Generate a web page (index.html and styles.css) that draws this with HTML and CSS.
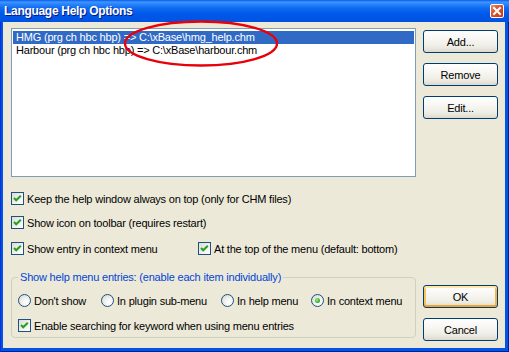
FILE: index.html
```html
<!DOCTYPE html>
<html>
<head>
<meta charset="utf-8">
<title>Language Help Options</title>
<link rel="stylesheet" href="styles.css">
</head>
<body>
<div class="window">
  <div class="titlebar">
    <span class="title">Language Help Options</span>
    <span class="close"><svg width="12" height="12" viewBox="0 0 12 12"><path d="M3 3 L9 9 M9 3 L3 9" stroke="#fff" stroke-width="2" stroke-linecap="square"/></svg></span>
  </div>
  <div class="client">
    <div class="top">
      <div class="listbox">
        <div class="item selected">HMG (prg ch hbc hbp) =&gt; C:\xBase\hmg_help.chm</div>
        <div class="item">Harbour (prg ch hbc hbp) =&gt; C:\xBase\harbour.chm</div>
      </div>
      <div class="btncol">
        <div class="btn">Add...</div>
        <div class="btn">Remove</div>
        <div class="btn">Edit...</div>
      </div>
    </div>
    <div class="checks">
      <div class="row r1"><span class="cb"><svg width="11" height="11" viewBox="0 0 11 11"><path d="M2 5 L4.2 7.3 L8.8 2.7" fill="none" stroke="#21A121" stroke-width="2"/></svg></span>Keep the help window always on top (only for CHM files)</div>
      <div class="row r2"><span class="cb"><svg width="11" height="11" viewBox="0 0 11 11"><path d="M2 5 L4.2 7.3 L8.8 2.7" fill="none" stroke="#21A121" stroke-width="2"/></svg></span>Show icon on toolbar (requires restart)</div>
      <div class="row r3">
        <div class="opt first"><span class="cb"><svg width="11" height="11" viewBox="0 0 11 11"><path d="M2 5 L4.2 7.3 L8.8 2.7" fill="none" stroke="#21A121" stroke-width="2"/></svg></span>Show entry in context menu</div>
        <div class="opt"><span class="cb"><svg width="11" height="11" viewBox="0 0 11 11"><path d="M2 5 L4.2 7.3 L8.8 2.7" fill="none" stroke="#21A121" stroke-width="2"/></svg></span>At the top of the menu (default: bottom)</div>
      </div>
    </div>
    <div class="bottom">
      <fieldset class="group">
        <legend>Show help menu entries: (enable each item individually)</legend>
        <div class="radios">
          <div class="opt"><span class="rb"></span>Don't show</div>
          <div class="opt"><span class="rb"></span>In plugin sub-menu</div>
          <div class="opt"><span class="rb"></span>In help menu</div>
          <div class="opt"><span class="rb on"><span class="dot"></span></span>In context menu</div>
        </div>
        <div class="row gr"><span class="cb"><svg width="11" height="11" viewBox="0 0 11 11"><path d="M2 5 L4.2 7.3 L8.8 2.7" fill="none" stroke="#21A121" stroke-width="2"/></svg></span>Enable searching for keyword when using menu entries</div>
      </fieldset>
      <div class="btncol low">
        <div class="btn default">OK</div>
        <div class="btn">Cancel</div>
      </div>
    </div>
  </div>
  <svg class="annot" width="509" height="352" viewBox="0 0 509 352"><ellipse cx="201" cy="43.5" rx="76" ry="22" fill="none" stroke="#E8000B" stroke-width="2.4"/></svg>
</div>
</body>
</html>
```
FILE: styles.css
```css
* { box-sizing: border-box; }
html, body { margin: 0; padding: 0; }
body {
  width: 509px;
  height: 352px;
  overflow: hidden;
  font-family: "Liberation Sans", Arial, sans-serif;
  font-size: 11px;
  letter-spacing: -0.2px;
  color: #000;
  background: #0055E5;
}
.window {
  position: relative;
  width: 509px;
  height: 352px;
  display: flex;
  flex-direction: column;
  background: #0055E5;
  box-shadow: inset 1px 0 #0831D9, inset -1px 0 #001EA0, inset 0 -1px #001EA0;
}
.titlebar {
  height: 22px;
  flex: none;
  display: flex;
  align-items: center;
  padding: 0 5px 0 4px;
  background: linear-gradient(to bottom, #0A5BEA 0, #3D95FF 2px, #2B86FB 4px, #0F6BF2 8px, #0058E8 14px, #0055E5 20px, #0050DC 22px);
}
.title {
  color: #fff;
  font-weight: bold;
  font-size: 12px;
  letter-spacing: -0.3px;
  text-shadow: 1px 1px #0A1883;
}
.close {
  margin-left: auto;
  width: 14px;
  height: 14px;
  border: 1px solid #fff;
  border-radius: 2px;
  background: linear-gradient(135deg, #EC8B6B 0%, #DA5028 45%, #C23A12 100%);
  display: flex;
  align-items: center;
  justify-content: center;
}
.close svg { display: block; }
.client {
  flex: 1;
  margin: 0 4px 4px 3px;
  background: #ECE9D8;
  padding: 6px 7px 0 8px;
  display: flex;
  flex-direction: column;
}
.top { display: flex; gap: 7px; }
.listbox {
  width: 405px;
  height: 149px;
  background: #fff;
  border: 1px solid #7F9DB9;
  padding: 2px 1px;
}
.item {
  height: 13px;
  line-height: 13px;
  padding-left: 3px;
  white-space: nowrap;
}
.item.selected { background: #316AC5; color: #fff; }
.btncol {
  display: flex;
  flex-direction: column;
  gap: 10px;
  padding-top: 2px;
}
.btncol.low { padding-top: 14px; }
.btn {
  width: 75px;
  height: 23px;
  border: 1px solid #003C74;
  border-radius: 3px;
  background: linear-gradient(to bottom, #FFFFFF 0%, #F7F6F2 40%, #EEEDE5 75%, #DCD8CC 100%);
  display: flex;
  align-items: center;
  justify-content: center;
}
.btn.default {
  box-shadow: inset 0 2px #FFE7A8, inset 0 -2px #F0A52A, inset 2px 0 #F8C55C, inset -2px 0 #F5B545;
}
.checks { margin-top: 13px; }
.row {
  display: flex;
  align-items: center;
  height: 17px;
  white-space: nowrap;
}
.r2 { margin-top: 7px; }
.r3 { margin-top: 9px; }
.opt { display: flex; align-items: center; white-space: nowrap; }
.opt.first { width: 187px; }
.cb {
  width: 13px;
  height: 13px;
  flex: none;
  margin-right: 3px;
  border: 1px solid #1C5180;
  background: linear-gradient(135deg, #DCDCD7 0%, #F2F2EE 60%, #FFFFFF 100%);
}
.cb svg { display: block; }
.bottom {
  margin-top: 14px;
  display: flex;
  gap: 7px;
  align-items: flex-start;
}
.group {
  width: 405px;
  margin: 0;
  border: 1px solid #D0D0BF;
  border-radius: 4px;
  padding: 8px 6px 3px 6px;
  min-width: 0;
}
.group legend {
  padding: 0 2px;
  color: #0046D5;
  line-height: 13px;
}
.radios {
  display: grid;
  grid-template-columns: 83px 120px 90px auto;
  height: 17px;
  align-items: center;
}
.gr { margin-top: 8px; }
.rb {
  width: 13px;
  height: 13px;
  flex: none;
  margin-right: 3px;
  border-radius: 50%;
  border: 1px solid #1C5180;
  background: radial-gradient(circle at 65% 65%, #FFFFFF 0%, #F4F4F0 35%, #D4D4CC 100%);
  display: flex;
  align-items: center;
  justify-content: center;
}
.dot {
  width: 5px;
  height: 5px;
  border-radius: 50%;
  background: radial-gradient(circle at 40% 40%, #A8EBA0 0%, #3EBB3E 50%, #1A8F1A 100%);
}
.annot {
  position: absolute;
  left: 0;
  top: 0;
  pointer-events: none;
}
```
